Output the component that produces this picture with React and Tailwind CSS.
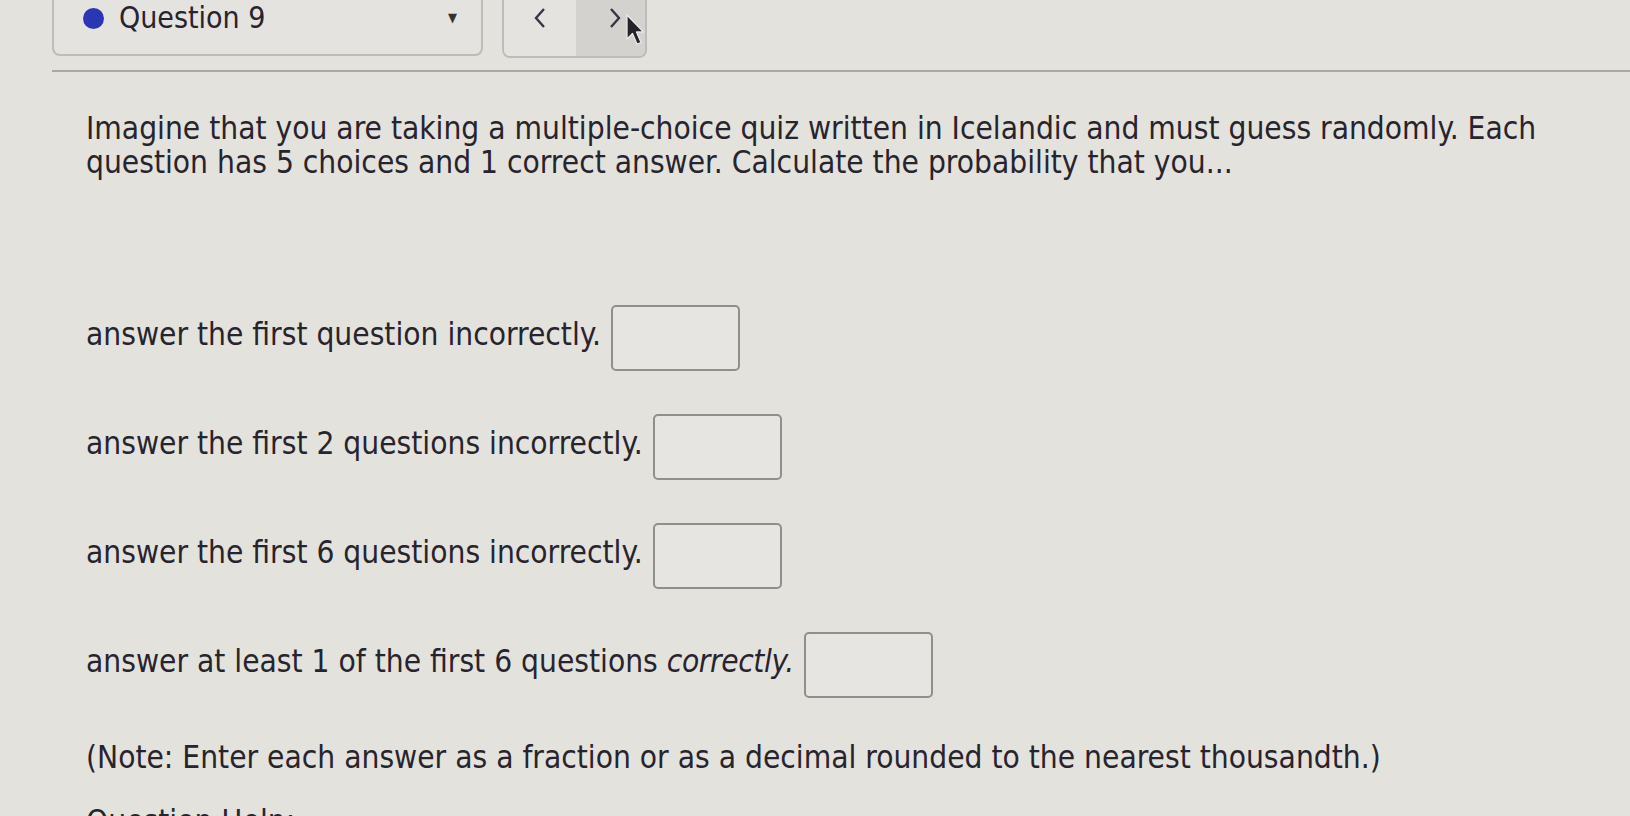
import React from 'react';

const rows = [
    { text: 'answer the first question incorrectly.' },
    { text: 'answer the first 2 questions incorrectly.' },
    { text: 'answer the first 6 questions incorrectly.' },
    { text: 'answer at least 1 of the first 6 questions ', em: 'correctly.' },
];

const AnswerBox = () => (
    <div className="w-[129px] h-[66px] rounded-[5px] border-2 border-[#8f8f8c] bg-[#e6e5e1]"></div>
);

const Chevron = ({ dir }) => (
    <svg width="14" height="22" viewBox="0 0 14 22">
        <polyline
            points={dir === 'left' ? '11,2 3,11 11,20' : '3,2 11,11 3,20'}
            fill="none"
            stroke="#3b3445"
            strokeWidth="2.4"
        />
    </svg>
);

const App = () => {
    return (
        <div
            className="w-[1630px] h-[816px] overflow-hidden bg-[#e3e2dd] text-[#28242d]"
            style={{ fontFamily: '"DejaVu Sans Condensed", "DejaVu Sans", sans-serif' }}
        >
            {/* Barre du haut */}
            <div className="flex items-start pl-[52px] gap-[19px]">
                <div className="w-[431px] h-[66px] -mt-[10px] rounded-b-[8px] border-2 border-t-0 border-[#bdbcb8] bg-[#e4e3df] flex items-center pl-[29px] pr-[24px] pb-[8px]">
                    <span className="w-[21px] h-[21px] rounded-full bg-[#2a36b4] mr-[15px]"></span>
                    <span className="text-[30px] leading-none">Question 9</span>
                    <span className="ml-auto text-[13px] text-[#333]">▼</span>
                </div>
                <div className="w-[145px] h-[68px] -mt-[10px] rounded-b-[8px] border-2 border-t-0 border-[#bdbcb8] flex overflow-hidden">
                    <div className="w-[72px] flex items-center justify-center pb-[10px] bg-[#e4e3df]">
                        <Chevron dir="left" />
                    </div>
                    <div className="flex-1 flex items-center pl-[32px] pb-[10px] bg-[#d3d2ce] relative">
                        <Chevron dir="right" />
                        <svg className="absolute left-[49px] top-[23px]" width="20" height="34" viewBox="0 0 20 34">
                            <path d="M2 2 L2 26 L7.5 20.5 L12 31 L16 29.5 L11.5 19 L18.5 19 Z" fill="#25222a" stroke="#e8e8e8" strokeWidth="1.3" strokeLinejoin="round" />
                        </svg>
                    </div>
                </div>
            </div>

            <div className="ml-[52px] mt-[12px] h-[2px] bg-[#a9a8a4]"></div>

            {/* Énoncé */}
            <div className="pl-[86px] pt-[39px]">
                <p className="text-[31.4px] leading-[34px] w-[1500px]">
                    Imagine that you are taking a multiple-choice quiz written in Icelandic and must guess randomly. Each question has 5 choices and 1 correct answer. Calculate the probability that you...
                </p>

                <div className="mt-[126px] flex flex-col gap-[43px]">
                    {rows.map((r, i) => (
                        <div key={i} className="flex items-center gap-[10px]">
                            <span className="text-[31.4px] leading-[34px] -mt-[8px]">
                                {r.text}
                                {r.em && <em className="tracking-[-0.4px]">{r.em}</em>}
                            </span>
                            <AnswerBox />
                        </div>
                    ))}
                </div>

                <p className="mt-[42px] text-[31.4px] leading-[34px]">
                    (Note: Enter each answer as a fraction or as a decimal rounded to the nearest thousandth.)
                </p>

                <p className="mt-[30px] text-[31.4px] leading-[34px]">Question Help:</p>
            </div>
        </div>
    );
};

export default App;
